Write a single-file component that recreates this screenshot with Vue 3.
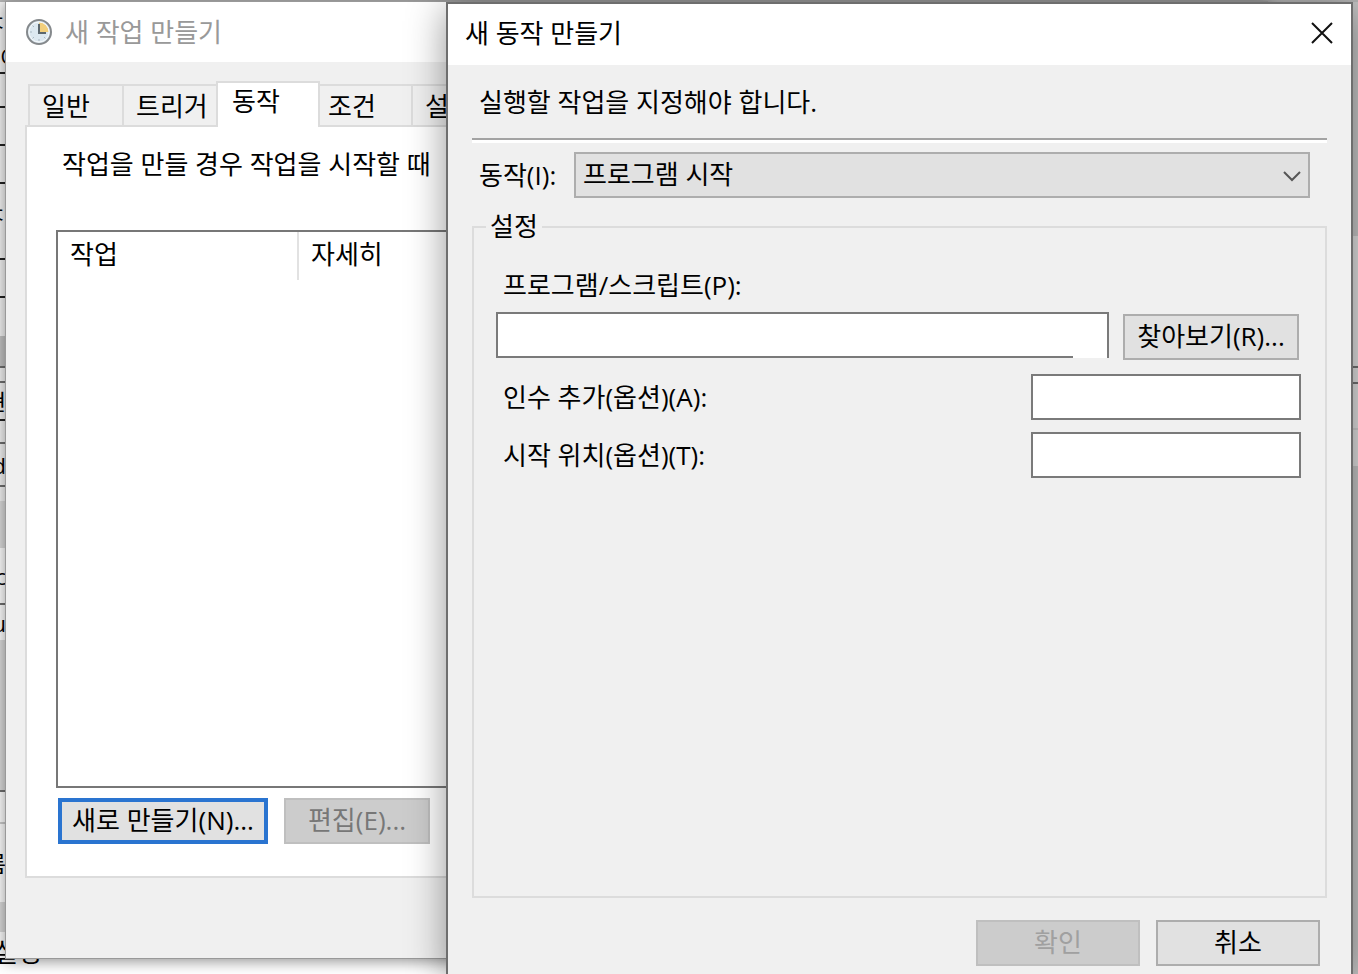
<script setup>
import { ref } from 'vue'

const tabs = ['일반', '트리거', '동작', '조건', '설정']
const activeTab = ref('동작')
const action = ref('프로그램 시작')
const program = ref('')
const args = ref('')
const startIn = ref('')

const leftRows = [
  { h: 40, t: 'ㅈ', k: '' },
  { h: 32, t: '이', k: 'start line' },
  { h: 34, t: '', k: 'line' },
  { h: 38, t: '', k: 'line' },
  { h: 38, t: '', k: 'line' },
  { h: 44, t: 'ㅈ', k: 'end' },
  { h: 32, t: '', k: 'line' },
  { h: 38, t: '', k: 'line' },
  { h: 38, t: '', k: '' },
  { h: 32, t: '', k: 'thumb rule' },
  { h: 15, t: '', k: 'rule' },
  { h: 38, t: '현', k: 'line' },
  { h: 23, t: '', k: 'rule' },
  { h: 43, t: 'd', k: 'rule' },
  { h: 14, t: '', k: '' },
  { h: 47, t: '', k: 'soft' },
  { h: 57, t: 'c', k: 'rule light' },
  { h: 35, t: 'u', k: 'light' },
  { h: 152, t: '', k: 'soft rule' },
  { h: 32, t: '', k: 'light hair' },
  { h: 78, t: '름', k: 'light' },
  { h: 30, t: '', k: 'soft' },
  { h: 42, t: '', k: 'light' }
]
const rightRows = [
  { h: 234, k: 'thumb' },
  { h: 132, k: 'rule' },
  { h: 16, k: 'rule' },
  { h: 46, k: 'hair' },
  { h: 36, k: '' }
]
</script>

<template>
  <div class="desktop">
    <div class="behind">
      <div class="strip">
        <div v-for="(r, i) in leftRows" :key="i" class="cell" :class="r.k" :style="{ height: r.h + 'px' }">{{ r.t }}</div>
      </div>
      <div class="status">설정</div>
      <div class="strip strip-right">
        <div v-for="(r, i) in rightRows" :key="i" class="cell" :class="r.k" :style="{ height: r.h + 'px' }"></div>
        <div class="cell thumb rest"></div>
      </div>
    </div>

    <section class="window task" aria-label="새 작업 만들기">
      <header class="titlebar muted">
        <svg class="clock" viewBox="0 0 28 28" aria-hidden="true">
          <circle cx="14" cy="14" r="12" fill="#dce8f0" stroke="#85898c" stroke-width="2" />
          <path d="M14 14V4A10 10 0 0 1 24 14Z" fill="#f2cf7c" />
          <circle cx="14" cy="14" r="10" fill="none" stroke="#f6f9fb" stroke-width="1" />
          <path d="M5 14h2M14 21v2M7.6 20.4l1.4-1.4M20.4 20.4L19 19M7.6 7.6L9 9" stroke="#a9b8c2" stroke-width="1" />
          <path d="M14 6v9M13 15h8" fill="none" stroke="#5b676e" stroke-width="2" />
        </svg>
        <span>새 작업 만들기</span>
      </header>
      <div class="task-body">
        <div class="tabs" role="tablist">
          <button v-for="t in tabs" :key="t" type="button" role="tab" class="tab" :class="{ active: t === activeTab }" :aria-selected="t === activeTab" @click="activeTab = t">{{ t }}</button>
        </div>
        <div class="panel">
          <p class="hint">작업을 만들 경우 작업을 시작할 때</p>
          <div class="list">
            <table>
              <thead>
                <tr><th scope="col" class="col-first">작업</th><th scope="col">자세히</th></tr>
              </thead>
            </table>
          </div>
          <div class="list-actions">
            <button type="button" class="btn focus">새로 만들기(N)...</button>
            <button type="button" class="btn edit" disabled>편집(E)...</button>
          </div>
        </div>
      </div>
    </section>

    <section class="window dialog" role="dialog" aria-label="새 동작 만들기">
      <header class="titlebar">
        <span>새 동작 만들기</span>
        <button type="button" class="close" aria-label="닫기">
          <svg viewBox="0 0 22 22" aria-hidden="true"><path d="M1 1L21 21M21 1L1 21" stroke="#111" stroke-width="2" /></svg>
        </button>
      </header>
      <form class="dialog-body" @submit.prevent>
        <p class="lead">실행할 작업을 지정해야 합니다.</p>
        <hr />
        <div class="action-row">
          <label for="action">동작(I):</label>
          <div class="select">
            <select id="action" v-model="action">
              <option>프로그램 시작</option>
            </select>
            <svg viewBox="0 0 18 12" aria-hidden="true"><path d="M1 2L9 10L17 2" fill="none" stroke="#555" stroke-width="2" /></svg>
          </div>
        </div>
        <fieldset>
          <legend>설정</legend>
          <label for="program" class="program-label">프로그램/스크립트(P):</label>
          <div class="program-row">
            <div class="program-box"><input id="program" v-model="program" type="text" /></div>
            <button type="button" class="btn browse">찾아보기(R)...</button>
          </div>
          <div class="field">
            <label for="args">인수 추가(옵션)(A):</label>
            <input id="args" v-model="args" type="text" />
          </div>
          <div class="field">
            <label for="start">시작 위치(옵션)(T):</label>
            <input id="start" v-model="startIn" type="text" />
          </div>
        </fieldset>
        <footer>
          <button type="submit" class="btn ok" disabled>확인</button>
          <button type="button" class="btn">취소</button>
        </footer>
      </form>
    </section>
  </div>
</template>

<style>
body {
  margin: 0;
}
</style>

<style scoped>
* {
  box-sizing: border-box;
}
.desktop {
  position: relative;
  height: 100vh;
  min-height: 900px;
  overflow: hidden;
  background: #fff;
  color: #000;
  font-family: "Open Sans", "Noto Sans CJK KR", sans-serif;
  font-size: 26px;
  line-height: 34px;
}
button,
input,
select {
  font: inherit;
  color: inherit;
  border-radius: 0;
  margin: 0;
}
p {
  margin: 0;
}
.behind {
  display: flex;
  height: 100%;
  border-top: 2px solid #b4b4b4;
}
.strip {
  width: 6px;
  overflow: hidden;
  background: #f4f4f4;
}
.strip-right {
  width: 6px;
  display: flex;
  flex-direction: column;
  background: #dedede;
}
.cell {
  display: flex;
  justify-content: flex-end;
  align-items: center;
  overflow: hidden;
  font-size: 22px;
  line-height: 28px;
}
.start {
  justify-content: flex-start;
}
.end {
  align-items: flex-end;
}
.line {
  border-bottom: 2px solid #222;
}
.rule {
  border-bottom: 2px solid #707070;
}
.hair {
  border-bottom: 2px solid #ccc;
}
.thumb {
  background: #c4c4c4;
}
.soft {
  background: #dcdcdc;
}
.light {
  background: #fff;
}
.rest {
  flex: 1;
}
.status {
  flex: 1;
  align-self: flex-end;
  padding-bottom: 5px;
  margin-left: -12px;
}
.window {
  position: absolute;
  display: flex;
  flex-direction: column;
  background: #f0f0f0;
}
.task {
  top: 1px;
  left: 5px;
  right: 90px;
  bottom: 15px;
  border: 1px solid #999;
  box-shadow: 0 2px 14px rgba(0, 0, 0, 0.45);
}
.dialog {
  top: 2px;
  left: 446px;
  right: 5px;
  bottom: 0;
  border: 2px solid #6e6e6e;
  border-bottom: 0;
  box-shadow: 0 6px 36px rgba(0, 0, 0, 0.42);
}
.titlebar {
  display: flex;
  align-items: center;
  height: 61px;
  padding: 0 18px 4px 17px;
  background: #fff;
}
.muted {
  height: 60px;
  gap: 12px;
  padding: 0 0 0 19px;
  color: #999;
}
.clock {
  width: 28px;
  height: 28px;
}
.close {
  display: flex;
  margin-left: auto;
  padding: 0;
  border: 0;
  background: none;
}
.close svg {
  width: 22px;
  height: 22px;
}
.task-body {
  flex: 1;
  display: flex;
  flex-direction: column;
  padding: 19px 19px 80px;
}
.tabs {
  display: flex;
  align-items: flex-end;
  height: 44px;
  padding-left: 3px;
}
.tab {
  width: 94px;
  height: 41px;
  padding: 0 0 0 12px;
  border: 2px solid #dcdcdc;
  border-right-width: 0;
  border-bottom: 0;
  background: #f0f0f0;
  text-align: left;
}
.tab.active {
  z-index: 1;
  width: 104px;
  height: 46px;
  margin-bottom: -2px;
  padding: 0 0 8px 14px;
  border-right-width: 2px;
  background: #fff;
}
.tab.active + .tab {
  width: 91px;
  border-left: 0;
  padding-left: 8px;
}
.panel {
  flex: 1;
  display: flex;
  flex-direction: column;
  padding: 20px 29px 32px;
  border: 2px solid #dcdcdc;
  background: #fff;
}
.hint {
  padding-left: 6px;
}
.list {
  flex: 1;
  margin-top: 49px;
  border: 2px solid #777;
}
table {
  width: 100%;
  border-collapse: collapse;
}
th {
  height: 48px;
  padding: 0 0 4px 12px;
  font-weight: 400;
  text-align: left;
}
.col-first {
  width: 240px;
  border-right: 2px solid #e2e2e2;
}
.list-actions {
  display: flex;
  gap: 16px;
  padding: 10px 2px 0;
}
.btn {
  width: 164px;
  height: 46px;
  padding: 0 0 2px;
  border: 2px solid #adadad;
  background: #e1e1e1;
  text-align: center;
  white-space: nowrap;
}
.btn:disabled {
  border-color: #bfbfbf;
  background: #ccc;
  color: #777;
}
.btn.ok:disabled {
  color: #a0a0a0;
}
.btn.focus {
  width: 210px;
  border: 4px solid #2a74d0;
}
.btn.edit {
  width: 146px;
}
.dialog-body {
  flex: 1;
  display: flex;
  flex-direction: column;
  padding: 20px 24px 8px;
}
.lead {
  padding-left: 7px;
}
hr {
  width: 100%;
  height: 5px;
  margin: 19px 0 9px;
  border: 0;
  border-top: 2px solid #a3a3a3;
  border-bottom: 3px solid #fff;
}
.action-row {
  display: flex;
  align-items: center;
  padding: 0 17px 0 7px;
}
.action-row label {
  width: 95px;
}
.select {
  position: relative;
  flex: 1;
}
.select select {
  display: block;
  width: 100%;
  height: 46px;
  padding: 0 40px 2px 7px;
  border: 2px solid #adadad;
  background: #e1e1e1;
  appearance: none;
}
.select svg {
  position: absolute;
  top: 18px;
  right: 9px;
  width: 18px;
  height: 12px;
  pointer-events: none;
}
fieldset {
  flex: 1;
  min-width: 0;
  margin: 12px 0 22px;
  padding: 24px 24px 0 22px;
  border: 2px solid #dcdcdc;
}
legend {
  margin-left: -10px;
  padding: 0 4px 2px;
  line-height: 32px;
}
.program-label {
  display: block;
  padding-left: 7px;
}
.program-row {
  display: flex;
  align-items: flex-end;
  gap: 14px;
  margin: 10px 2px 14px 0;
}
.program-box {
  position: relative;
  flex: 1;
  padding-bottom: 2px;
}
.program-box::after {
  content: "";
  position: absolute;
  right: 2px;
  bottom: 2px;
  width: 34px;
  height: 2px;
  background: #fff;
}
input {
  display: block;
  height: 46px;
  padding: 0 8px;
  border: 2px solid #7a7a7a;
  background: #fff;
}
.program-box input {
  width: 100%;
}
.browse {
  width: 176px;
}
.field {
  display: flex;
  align-items: center;
  justify-content: space-between;
  margin-bottom: 12px;
  padding-left: 7px;
}
.field input {
  width: 270px;
}
footer {
  display: flex;
  justify-content: flex-end;
  gap: 16px;
  padding-right: 7px;
}
</style>
